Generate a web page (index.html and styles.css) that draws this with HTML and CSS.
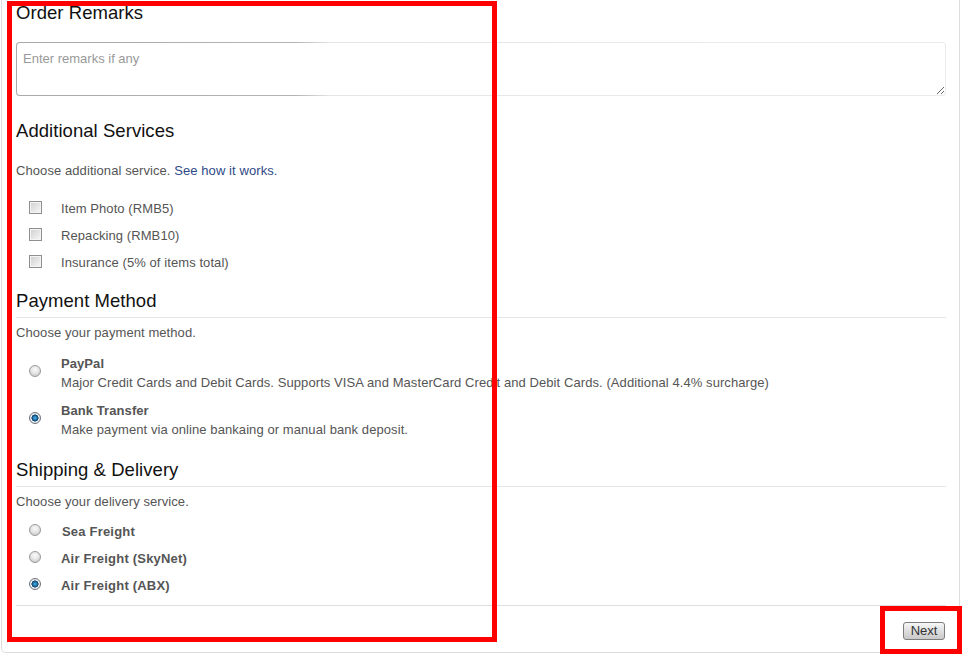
FILE: index.html
```html
<html>
<head>
<title>Checkout - Order Options</title>
<link rel="stylesheet" href="styles.css">
</head>
<body>
<div class="panel">
  <h2 class="section-title">Order Remarks</h2>
  <textarea class="remarks" placeholder="Enter remarks if any"></textarea>

  <h2 class="section-title services-title">Additional Services</h2>
  <p class="hint">Choose additional service. <a href="#">See how it works.</a></p>
  <div class="option-list">
    <label class="option-row"><input type="checkbox" class="check"><span>Item Photo (RMB5)</span></label>
    <label class="option-row"><input type="checkbox" class="check"><span>Repacking (RMB10)</span></label>
    <label class="option-row"><input type="checkbox" class="check"><span>Insurance (5% of items total)</span></label>
  </div>

  <h2 class="section-title ruled payment-title">Payment Method</h2>
  <p class="hint tight">Choose your payment method.</p>
  <div class="pay-list">
    <label class="pay-option">
      <input type="radio" class="radio" name="payment">
      <span class="pay-text">
        <strong>PayPal</strong>
        <span>Major Credit Cards and Debit Cards. Supports VISA and MasterCard Credit and Debit Cards. (Additional 4.4% surcharge)</span>
      </span>
    </label>
    <label class="pay-option">
      <input type="radio" class="radio" name="payment" checked>
      <span class="pay-text">
        <strong>Bank Transfer</strong>
        <span>Make payment via online bankaing or manual bank deposit.</span>
      </span>
    </label>
  </div>

  <h2 class="section-title ruled shipping-title">Shipping &amp; Delivery</h2>
  <p class="hint tight">Choose your delivery service.</p>
  <div class="delivery-list">
    <label class="option-row delivery-row"><input type="radio" class="radio" name="delivery"><strong class="sea">Sea Freight</strong></label>
    <label class="option-row delivery-row"><input type="radio" class="radio" name="delivery"><strong>Air Freight (SkyNet)</strong></label>
    <label class="option-row delivery-row"><input type="radio" class="radio" name="delivery" checked><strong>Air Freight (ABX)</strong></label>
  </div>

  <div class="form-footer">
    <button type="submit" class="next-btn">Next</button>
  </div>
</div>

<!-- review markers -->
<div class="mark mark-form"></div>
<div class="mark mark-next"></div>
</body>
</html>
```

FILE: styles.css
```css
body {
  margin: 0;
  font-family: "Liberation Sans", Arial, sans-serif;
  font-size: 13px;
  letter-spacing: 0.08px;
  color: #555;
  overflow: hidden;
}
.panel {
  margin: 0 2px 0 1px;
  padding: 2px 13px 12px 14px;
  border: 1px solid #dcdcdc;
  border-top: none;
  border-radius: 0 0 5px 5px;
}
.section-title {
  margin: 0;
  font-size: 18.5px;
  font-weight: normal;
  line-height: 22px;
  letter-spacing: 0.05px;
  color: #111;
}
.remarks {
  display: block;
  box-sizing: border-box;
  width: 100%;
  height: 54px;
  margin-top: 18px;
  padding: 6px;
  font-family: "Liberation Sans", Arial, sans-serif;
  font-size: 13px;
  line-height: 19px;
  border: 1px solid transparent;
  border-radius: 4px;
  background: linear-gradient(#fff, #fff) padding-box,
    linear-gradient(to right, #a9a9a9 0, #b4b4b4 30%, #e6e6e6 34%, #ebebeb 100%) border-box;
  resize: vertical;
  outline: none;
}
.remarks::placeholder {
  color: #999;
}
.services-title {
  margin-top: 24px;
}
.hint {
  margin: 20px 0 0;
  line-height: 18px;
}
.hint.tight {
  margin-top: 6px;
}
.hint a {
  color: #2f4a86;
  text-decoration: none;
}
.option-list {
  margin-top: 15px;
}
.option-row {
  display: flex;
  align-items: center;
  height: 27px;
}
.check {
  appearance: none;
  -webkit-appearance: none;
  box-sizing: border-box;
  width: 13px;
  height: 13px;
  margin: -2px 19px 0 13px;
  border: 1px solid #8f8f8f;
  background: linear-gradient(135deg, #cfcfcf, #f8f8f8);
  box-shadow: inset 0 0 0 1px #f4f4f4;
}
.radio {
  appearance: none;
  -webkit-appearance: none;
  box-sizing: border-box;
  width: 12px;
  height: 12px;
  border-radius: 50%;
  border: 1px solid #9a9a9a;
  background: radial-gradient(circle at 50% 35%, #fafafa 0, #e6e6e6 45%, #bdbdbd 100%);
  flex-shrink: 0;
}
.radio:checked {
  border-color: #6b7480;
  background: radial-gradient(circle at 50% 50%, #5cb3e4 0, #1b72ab 2px, #0c3b60 3.3px, #f2f2f2 3.8px, #d4d4d4 100%);
}
.payment-title {
  margin-top: 14px;
}
.ruled {
  padding-bottom: 5px;
  border-bottom: 1px solid #e6e6e6;
}
.pay-list {
  margin-top: 12px;
}
.pay-option {
  display: flex;
  align-items: flex-start;
  line-height: 19px;
}
.pay-option + .pay-option {
  margin-top: 9px;
}
.pay-option .radio {
  margin: 11px 20px 0 13px;
}
.pay-text {
  display: flex;
  flex-direction: column;
}
.shipping-title {
  margin-top: 20px;
}
.delivery-list {
  margin-top: 7px;
}
.delivery-row .radio {
  margin: -3px 20px 0 13px;
}
.delivery-row strong {
  letter-spacing: 0.2px;
}
.sea {
  margin-left: 1px;
}
.form-footer {
  display: flex;
  justify-content: flex-end;
  margin-top: 6px;
  padding-top: 16px;
  border-top: 1px solid #dedede;
}
.next-btn {
  box-sizing: border-box;
  width: 42px;
  height: 18px;
  margin-right: 1px;
  padding: 0;
  font-family: "Liberation Sans", Arial, sans-serif;
  font-size: 13px;
  line-height: 16px;
  color: #333;
  border: 1px solid #7d7d7d;
  border-radius: 3px;
  background: linear-gradient(#f7f7f7, #dedede 50%, #c9c9c9);
  cursor: pointer;
}
.mark {
  position: absolute;
  box-sizing: border-box;
  border: 5px solid #f00;
  pointer-events: none;
}
.mark-form {
  left: 7px;
  top: 1px;
  width: 490px;
  height: 641px;
}
.mark-next {
  left: 880px;
  top: 606px;
  width: 82px;
  height: 48px;
}
```
